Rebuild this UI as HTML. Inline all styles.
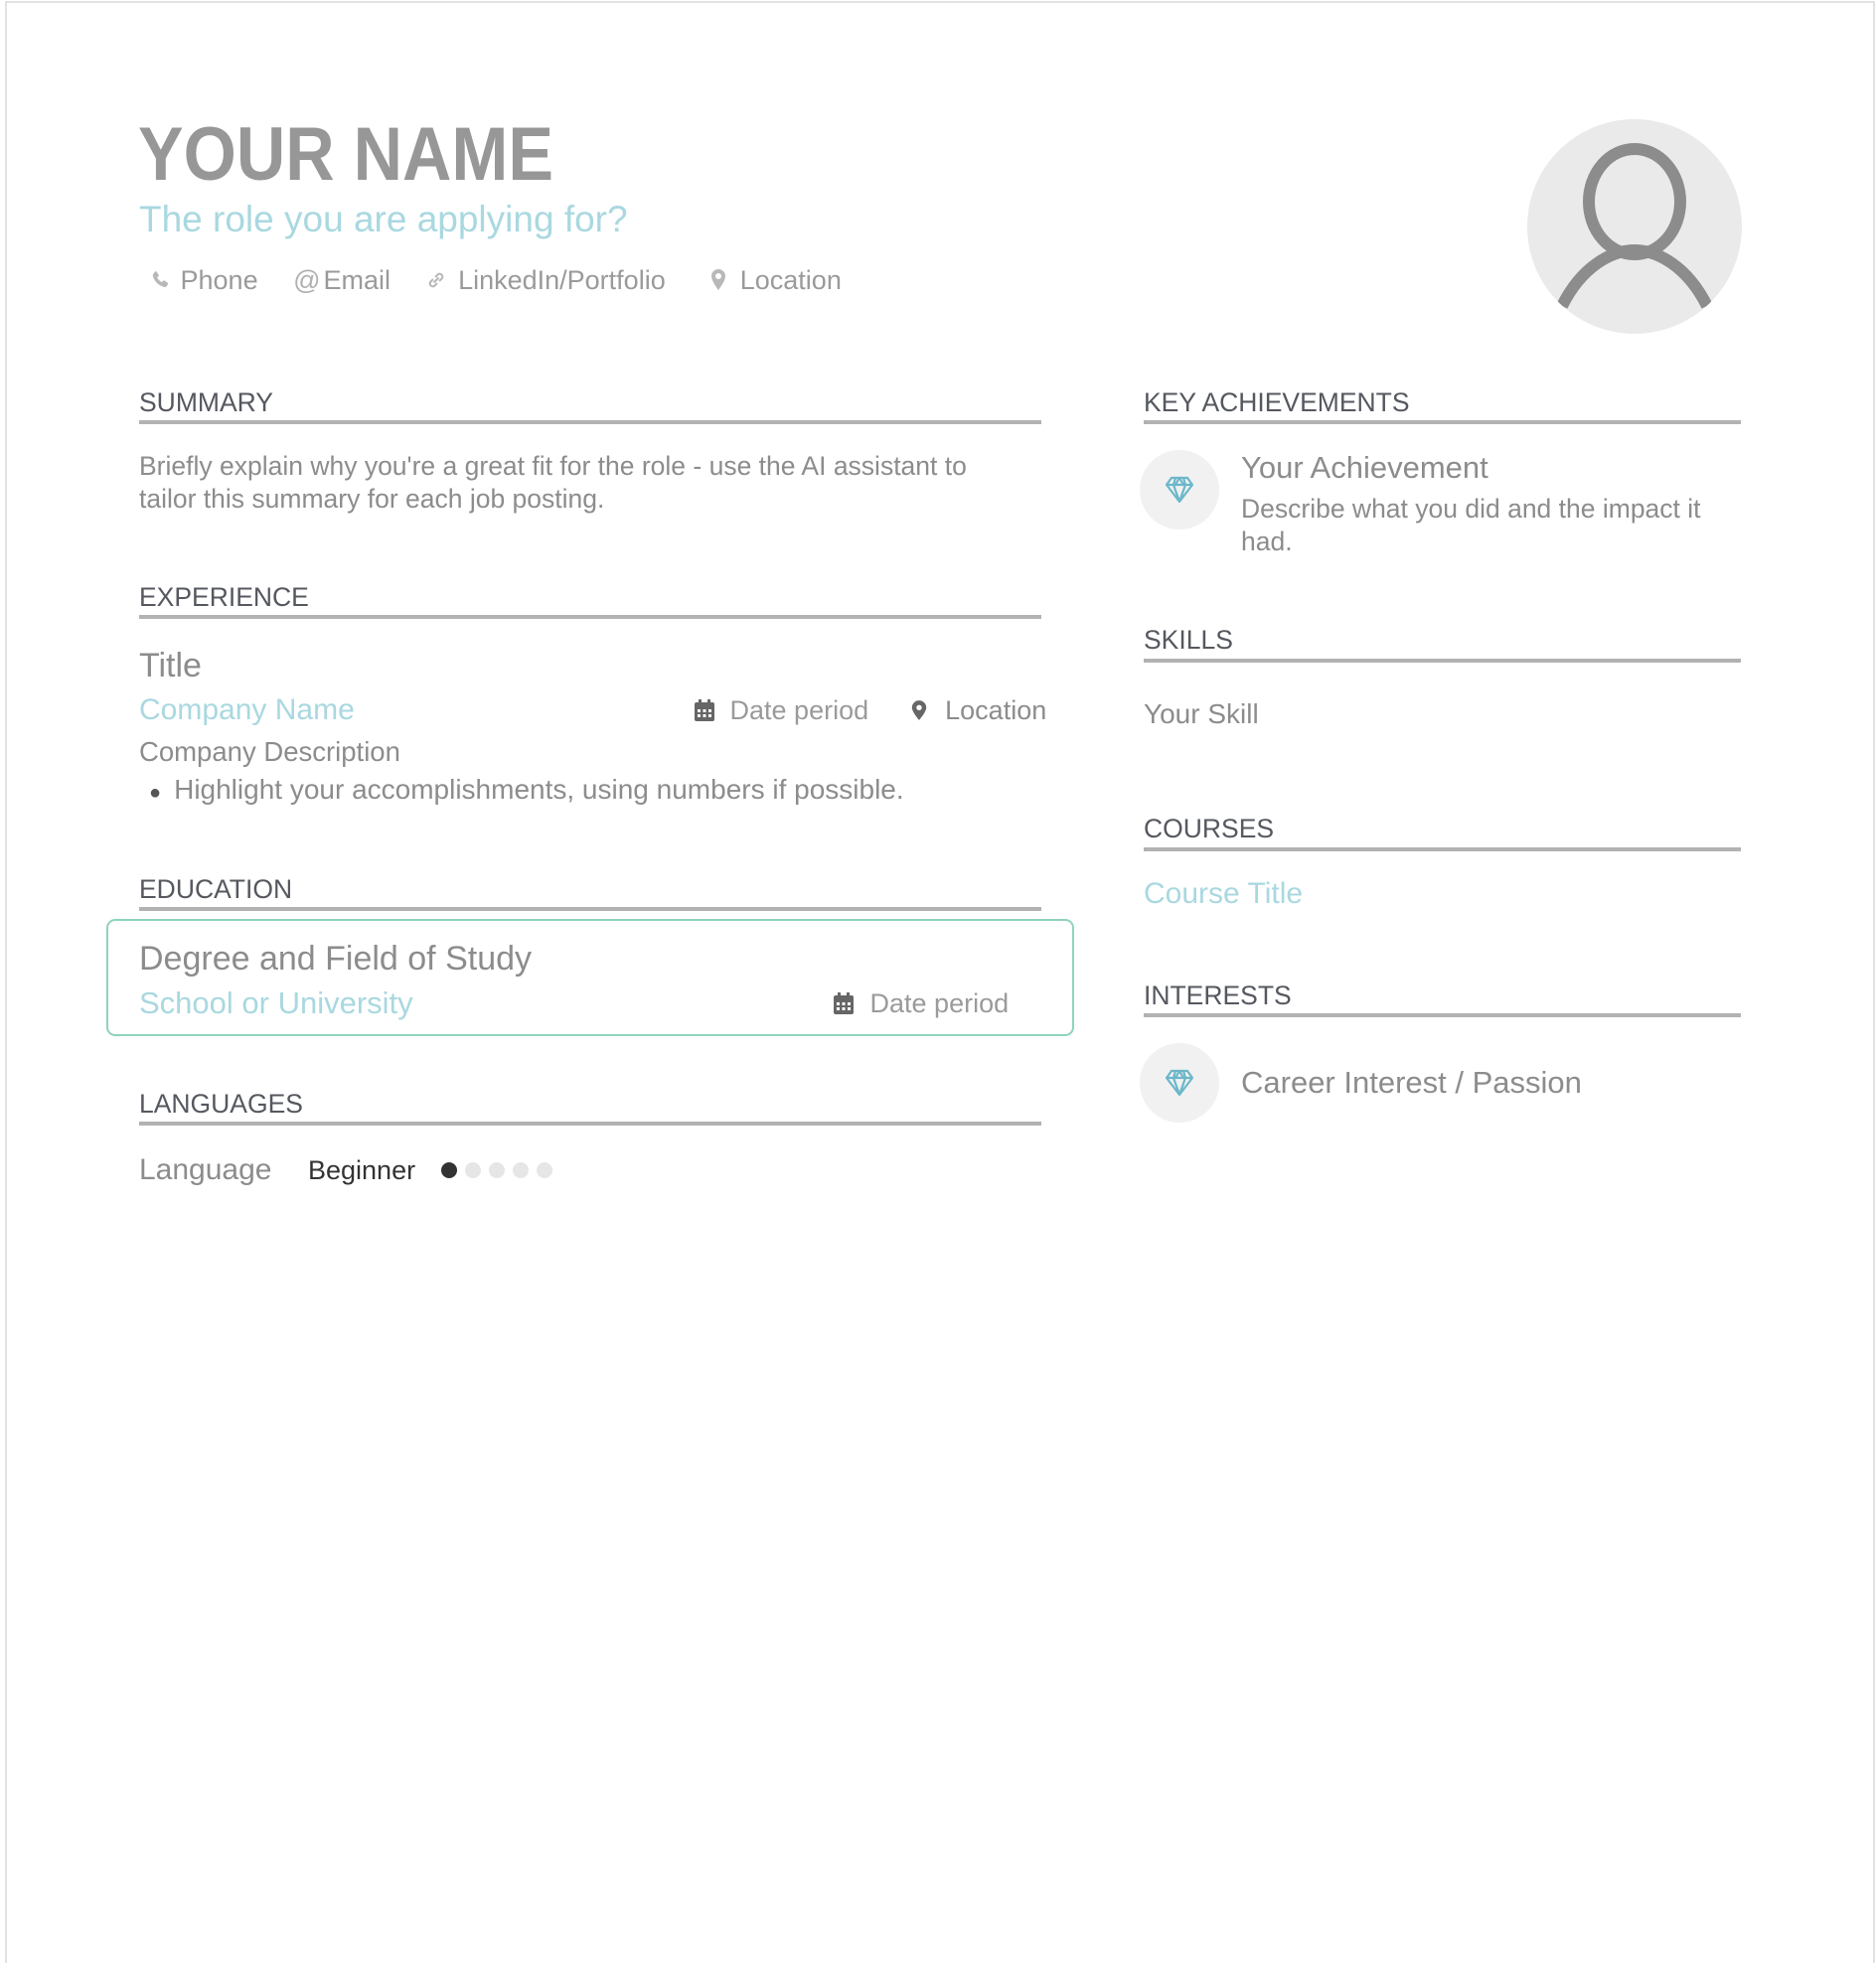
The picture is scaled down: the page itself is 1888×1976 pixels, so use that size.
<!DOCTYPE html>
<html><head><meta charset="utf-8"><style>
*{margin:0;padding:0;box-sizing:border-box}
body{width:1888px;height:1972px;background:#fff;position:relative;overflow:hidden;font-family:"Liberation Sans",Arial,sans-serif}
.frame{position:absolute;left:5px;top:1px;width:1882px;height:1975px;border:2px solid #e2e2e2;border-bottom:none}
.t{position:absolute;white-space:nowrap}
.h{position:absolute;font-size:26.5px;color:#55585f;line-height:30px}
.ln{position:absolute;height:4px;background:#b2b2b2}
.g{color:#8c8c8c}
.c{color:#a9d8e0}
</style></head><body>
<div class="frame"></div>

<div class="t" style="left:139px;top:111px;font-size:76px;font-weight:bold;color:#979797;line-height:90px;transform:scaleX(0.9);transform-origin:0 0">YOUR NAME</div>
<div class="t c" style="left:140px;top:199px;font-size:37px;line-height:44px">The role you are applying for?</div>

<div class="t" style="left:150px;top:266px;font-size:27px;line-height:32px;color:#9a9a9a">
<svg width="22" height="22" viewBox="0 0 24 24" style="vertical-align:-2px"><path d="M6.6 2.5c.6-.4 1.3-.3 1.7.3l2.2 3.3c.4.6.3 1.3-.2 1.7L8.9 8.9c.9 2.3 3 4.4 5.3 5.4l1.2-1.5c.4-.5 1.200-.6 1.7-.2l3.3 2.2c.6.4.7 1.1.3 1.7l-1.3 2c-.6.9-1.7 1.4-2.8 1.1C10.5 18.2 5.800 13.5 4.2 7.4 3.9 6.3 4.3 5.2 5.2 4.6z" fill="#b8b8b8"/></svg>
<span style="margin-left:2px">Phone</span>
<span style="margin-left:28px;color:#b0b0b0">@</span><span style="margin-left:3px">Email</span>
<svg width="24" height="24" viewBox="0 0 24 24" style="margin-left:26px;vertical-align:-3px" fill="none" stroke="#b8b8b8" stroke-width="2"><path d="M9.5 14.5l5-5M9 11l-3 3a3 3 0 004 4l3-3M15 13l3-3a3 3 0 00-4-4l-3 3"/></svg>
<span style="margin-left:3px">LinkedIn/Portfolio</span>
<svg width="20" height="24" viewBox="0 0 20 24" style="margin-left:36px;vertical-align:-3px"><path d="M10 1a7 7 0 00-7 7c0 5 7 14 7 14s7-9 7-14a7 7 0 00-7-7zm0 10a3 3 0 110-6 3 3 0 010 6z" fill="#b8b8b8"/></svg>
<span style="margin-left:4px">Location</span>
</div>

<div style="position:absolute;left:1537px;top:120px;width:216px;height:216px;border-radius:50%;background:#eaeaea;overflow:hidden">
<svg width="216" height="216" viewBox="0 0 216 216"><ellipse cx="108" cy="83" rx="46" ry="53" fill="none" stroke="#8c8c8c" stroke-width="12"/><path d="M35 188C55 148 85 132 108 132s53 16 73 56" fill="none" stroke="#8c8c8c" stroke-width="12"/></svg>
</div>

<!-- left column -->
<div class="h" style="left:140px;top:390px">SUMMARY</div>
<div class="ln" style="left:140px;top:423px;width:908px"></div>
<div class="t g" style="left:140px;top:453px;font-size:26.5px;line-height:33px;white-space:normal;width:880px">Briefly explain why you're a great fit for the role - use the AI assistant to tailor this summary for each job posting.</div>

<div class="h" style="left:140px;top:586px">EXPERIENCE</div>
<div class="ln" style="left:140px;top:619px;width:908px"></div>
<div class="t g" style="left:140px;top:651px;font-size:34px;line-height:38px">Title</div>
<div class="t c" style="left:140px;top:697px;font-size:30px;line-height:36px">Company Name</div>
<div class="t" style="left:698px;top:697px;font-size:27px;line-height:36px;color:#9a9a9a">
<svg width="22" height="24" viewBox="0 0 22 24" style="vertical-align:-3px"><rect x="1" y="4" width="20" height="19" rx="2" fill="#666"/><rect x="5" y="1" width="3" height="6" fill="#666"/><rect x="14" y="1" width="3" height="6" fill="#666"/><g fill="#fff"><rect x="4" y="11" width="3" height="3"/><rect x="9.5" y="11" width="3" height="3"/><rect x="15" y="11" width="3" height="3"/><rect x="4" y="16" width="3" height="3"/><rect x="9.5" y="16" width="3" height="3"/><rect x="15" y="16" width="3" height="3"/></g></svg>
<span style="margin-left:7px">Date period</span>
<svg width="18" height="24" viewBox="0 0 20 24" style="margin-left:34px;vertical-align:-3px"><path d="M10 1a8 8 0 00-8 8c0 5 8 14 8 14s8-9 8-14a8 8 0 00-8-8zm0 11a3 3 0 110-6 3 3 0 010 6z" fill="#666"/></svg>
<span style="margin-left:10px;color:#8c8c8c">Location</span>
</div>
<div class="t g" style="left:140px;top:741px;font-size:27.5px;line-height:32px">Company Description</div>
<div class="t g" style="left:150px;top:779px;font-size:28px;line-height:32px"><span style="color:#555;font-size:20px;margin-right:13px">●</span>Highlight your accomplishments, using numbers if possible.</div>

<div class="h" style="left:140px;top:880px">EDUCATION</div>
<div class="ln" style="left:140px;top:913px;width:908px"></div>
<div style="position:absolute;left:107px;top:925px;width:974px;height:118px;border:2px solid #8fd3bd;border-radius:9px"></div>
<div class="t g" style="left:140px;top:945px;font-size:34px;line-height:40px">Degree and Field of Study</div>
<div class="t c" style="left:140px;top:992px;font-size:31px;line-height:36px">School or University</div>
<div class="t" style="left:838px;top:992px;font-size:27px;line-height:36px;color:#9a9a9a">
<svg width="22" height="24" viewBox="0 0 22 24" style="vertical-align:-3px"><rect x="1" y="4" width="20" height="19" rx="2" fill="#666"/><rect x="5" y="1" width="3" height="6" fill="#666"/><rect x="14" y="1" width="3" height="6" fill="#666"/><g fill="#fff"><rect x="4" y="11" width="3" height="3"/><rect x="9.5" y="11" width="3" height="3"/><rect x="15" y="11" width="3" height="3"/><rect x="4" y="16" width="3" height="3"/><rect x="9.5" y="16" width="3" height="3"/><rect x="15" y="16" width="3" height="3"/></g></svg>
<span style="margin-left:8px">Date period</span></div>

<div class="h" style="left:140px;top:1096px">LANGUAGES</div>
<div class="ln" style="left:140px;top:1129px;width:908px"></div>
<div class="t g" style="left:140px;top:1160px;font-size:30px;line-height:36px">Language</div>
<div class="t" style="left:310px;top:1161px;font-size:27px;line-height:34px;color:#333">Beginner</div>
<div style="position:absolute;left:444px;top:1170px;width:16px;height:16px;border-radius:50%;background:#333"></div>
<div style="position:absolute;left:468px;top:1170px;width:16px;height:16px;border-radius:50%;background:#e6e6e6"></div>
<div style="position:absolute;left:492px;top:1170px;width:16px;height:16px;border-radius:50%;background:#e6e6e6"></div>
<div style="position:absolute;left:516px;top:1170px;width:16px;height:16px;border-radius:50%;background:#e6e6e6"></div>
<div style="position:absolute;left:540px;top:1170px;width:16px;height:16px;border-radius:50%;background:#e6e6e6"></div>

<!-- right column -->
<div class="h" style="left:1151px;top:390px">KEY ACHIEVEMENTS</div>
<div class="ln" style="left:1151px;top:423px;width:601px"></div>
<div style="position:absolute;left:1147px;top:453px;width:80px;height:80px;border-radius:50%;background:#f1f1f1"></div>
<svg style="position:absolute;left:1172px;top:479px" width="30" height="28" viewBox="0 0 30 28" fill="none" stroke="#6bb7c9" stroke-width="2.2" stroke-linejoin="round"><path d="M7 2h16l5 7-13 17L2 9z M2 9h26 M11 2l-2 7 6 17 6-17-2-7 M15 2l-4 7 M15 2l4 7"/></svg>
<div class="t g" style="left:1249px;top:453px;font-size:31px;line-height:36px">Your Achievement</div>
<div class="t g" style="left:1249px;top:496px;font-size:26.5px;line-height:33px;white-space:normal;width:500px">Describe what you did and the impact it had.</div>

<div class="h" style="left:1151px;top:629px">SKILLS</div>
<div class="ln" style="left:1151px;top:663px;width:601px"></div>
<div class="t g" style="left:1151px;top:702px;font-size:28px;line-height:34px">Your Skill</div>

<div class="h" style="left:1151px;top:819px">COURSES</div>
<div class="ln" style="left:1151px;top:853px;width:601px"></div>
<div class="t c" style="left:1151px;top:882px;font-size:30px;line-height:36px">Course Title</div>

<div class="h" style="left:1151px;top:987px">INTERESTS</div>
<div class="ln" style="left:1151px;top:1020px;width:601px"></div>
<div style="position:absolute;left:1147px;top:1050px;width:80px;height:80px;border-radius:50%;background:#f1f1f1"></div>
<svg style="position:absolute;left:1172px;top:1076px" width="30" height="28" viewBox="0 0 30 28" fill="none" stroke="#6bb7c9" stroke-width="2.2" stroke-linejoin="round"><path d="M7 2h16l5 7-13 17L2 9z M2 9h26 M11 2l-2 7 6 17 6-17-2-7 M15 2l-4 7 M15 2l4 7"/></svg>
<div class="t g" style="left:1249px;top:1071px;font-size:31px;line-height:38px">Career Interest / Passion</div>
</body></html>
